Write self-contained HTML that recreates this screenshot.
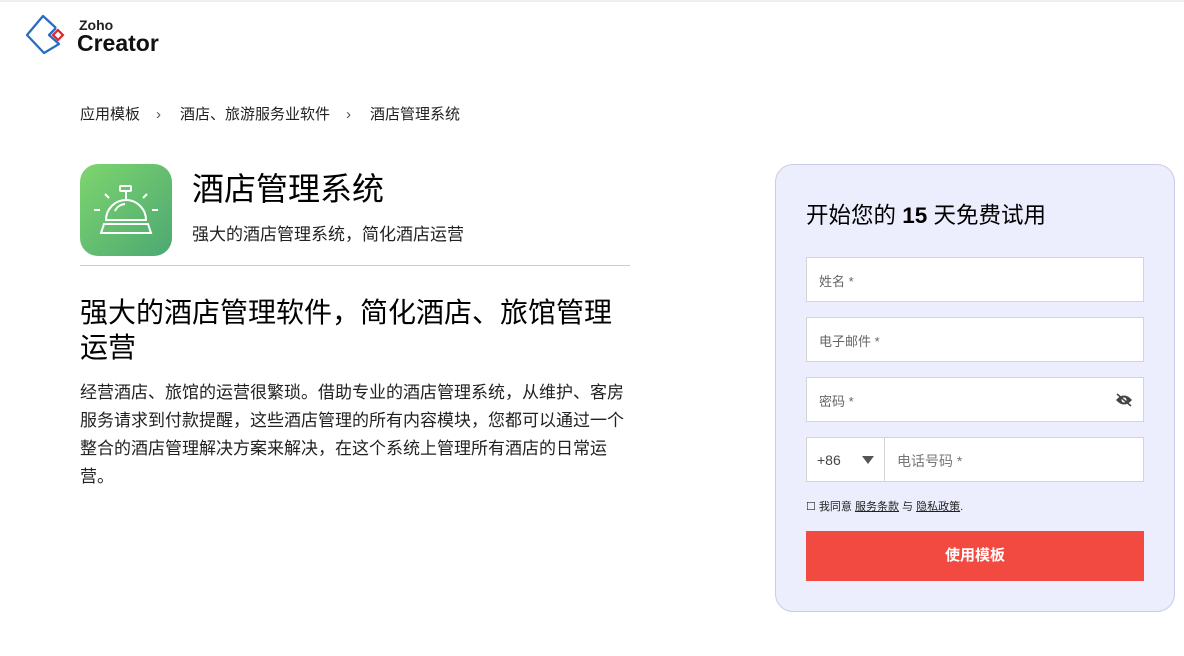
<!DOCTYPE html>
<html><head><meta charset="utf-8"><style>
*{margin:0;padding:0;box-sizing:border-box}
body{width:1184px;height:656px;background:#fff;font-family:"Liberation Sans","Noto Sans CJK SC",sans-serif;color:#000;position:relative;overflow:hidden}
.topline{position:absolute;top:0;left:0;right:0;height:2px;background:#eee}
.abs{position:absolute}
.crumb{top:103px;left:80px;font-size:15px;color:#222}
.crumb span{margin:0 19px 0 16px;color:#555}
.title{left:192px;top:164px;font-size:32px}
.sub{left:192px;top:220px;font-size:17px;color:#222}
.hr{left:80px;top:265px;width:550px;height:1px;background:#ccc}
.h2{left:80px;top:295px;width:545px;font-size:28px;line-height:35px}
.p{left:80px;top:379px;width:555px;font-size:17px;line-height:28px;color:#222}
.card{left:775px;top:164px;width:400px;height:448px;background:#eceefd;border:1px solid #c9cbe8;border-radius:18px}
.card h3{position:absolute;left:30px;top:33px;font-size:22.5px;font-weight:normal}
.inp{position:absolute;left:30px;width:338px;height:45px;background:#fff;border:1px solid #d5d5d5;font-size:13px;color:#666;padding:13px 12px}
.btn{position:absolute;left:30px;top:366px;width:338px;height:50px;background:#f24a40;color:#fff;font-size:15px;font-weight:bold;text-align:center;line-height:50px}
.agree{position:absolute;left:30px;top:333px;font-size:11px;color:#222}
</style></head><body>
<div class="topline"></div>
<svg class="abs" style="left:20px;top:10px" width="50" height="50" viewBox="0 0 50 50">
<path d="M36 18 L23 6 L7 25 L24 43 L39 34 L29 25 L36 18" fill="none" stroke="#2a6cc4" stroke-width="2.3" stroke-linejoin="round"/>
<rect x="34.5" y="21.5" width="7" height="7" transform="rotate(45 38 25)" fill="none" stroke="#e0262b" stroke-width="2.2"/>
</svg>
<div class="abs" style="left:79px;top:17px;font-size:14px;font-weight:bold;color:#222">Zoho</div>
<div class="abs" style="left:77px;top:30px;font-size:23px;font-weight:bold;color:#111">Creator</div>
<div class="abs crumb">应用模板<span>›</span>酒店、旅游服务业软件<span>›</span>酒店管理系统</div>
<div class="abs" style="left:80px;top:164px;width:92px;height:92px;border-radius:18px;background:linear-gradient(135deg,#7ed56e,#4ca872)">
<svg width="92" height="92" viewBox="0 0 92 92" fill="none" stroke="#fff" stroke-width="2">
<rect x="40" y="22" width="11" height="5" rx="1"/><line x1="46" y1="27" x2="46" y2="36"/>
<path d="M26 56 A20 20 0 0 1 66 56 Z"/><path d="M35 47 A12 12 0 0 1 45 40"/>
<path d="M24 60 H68 L71 69 H21 Z"/>
<line x1="14" y1="46" x2="20" y2="46"/><line x1="72" y1="46" x2="78" y2="46"/>
<line x1="25" y1="30" x2="29" y2="34"/><line x1="67" y1="30" x2="63" y2="34"/>
</svg></div>
<div class="abs title">酒店管理系统</div>
<div class="abs sub">强大的酒店管理系统，简化酒店运营</div>
<div class="abs hr"></div>
<div class="abs h2">强大的酒店管理软件，简化酒店、旅馆管理运营</div>
<div class="abs p">经营酒店、旅馆的运营很繁琐。借助专业的酒店管理系统，从维护、客房服务请求到付款提醒，这些酒店管理的所有内容模块，您都可以通过一个整合的酒店管理解决方案来解决，在这个系统上管理所有酒店的日常运营。</div>
<div class="abs card">
<h3>开始您的 <b>15</b> 天免费试用</h3>
<div class="inp" style="top:92px">姓名 *</div>
<div class="inp" style="top:152px">电子邮件 *</div>
<div class="inp" style="top:212px">密码 *<svg style="position:absolute;right:10px;top:15px" width="18" height="14" viewBox="0 0 18 14"><path d="M1 7 Q9 -2 17 7 Q9 16 1 7Z" fill="#444"/><circle cx="9" cy="7" r="2.5" fill="#fff"/><line x1="2" y1="1" x2="16" y2="13" stroke="#444" stroke-width="1.5"/></svg></div>
<div class="inp" style="top:272px;padding:0">
<div style="position:absolute;left:0;top:0;width:78px;height:43px;border-right:1px solid #d5d5d5;padding:14px 10px;font-size:14px;color:#444">+86<span style="position:absolute;right:10px;top:18px;border:6px solid transparent;border-top:8px solid #555"></span></div>
<div style="position:absolute;left:90px;top:13px;font-size:14px;color:#777">电话号码 *</div></div>
<div class="agree">☐ 我同意 <u>服务条款</u> 与 <u>隐私政策</u>.</div>
<div class="btn">使用模板</div>
</div>
</body></html>
